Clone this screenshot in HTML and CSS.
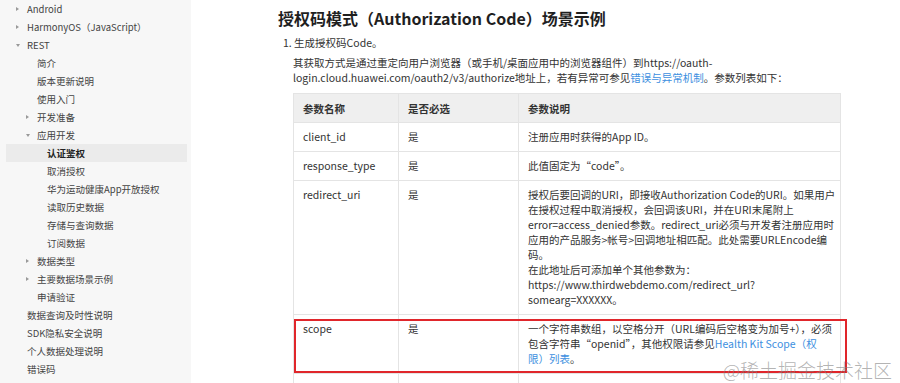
FILE: index.html
```html
<!DOCTYPE html>
<html lang="zh-CN">
<head>
<meta charset="utf-8">
<title>授权码模式（Authorization Code）场景示例</title>
<link rel="stylesheet" href="styles.css">
</head>
<body>
<div class="page">
  <nav class="sidebar">
    <div class="nav-item lv0"><span class="caret"><i class="tri right"></i></span>Android</div>
    <div class="nav-item lv0"><span class="caret"><i class="tri right"></i></span>HarmonyOS（JavaScript）</div>
    <div class="nav-item lv0"><span class="caret"><i class="tri down"></i></span>REST</div>
    <div class="nav-item lv1"><span class="caret"></span>简介</div>
    <div class="nav-item lv1"><span class="caret"></span>版本更新说明</div>
    <div class="nav-item lv1"><span class="caret"></span>使用入门</div>
    <div class="nav-item lv1"><span class="caret"><i class="tri right"></i></span>开发准备</div>
    <div class="nav-item lv1"><span class="caret"><i class="tri down"></i></span>应用开发</div>
    <div class="nav-item lv2 active"><span class="caret"></span>认证鉴权</div>
    <div class="nav-item lv2"><span class="caret"></span>取消授权</div>
    <div class="nav-item lv2"><span class="caret"></span>华为运动健康App开放授权</div>
    <div class="nav-item lv2"><span class="caret"></span>读取历史数据</div>
    <div class="nav-item lv2"><span class="caret"></span>存储与查询数据</div>
    <div class="nav-item lv2"><span class="caret"></span>订阅数据</div>
    <div class="nav-item lv1"><span class="caret"><i class="tri right"></i></span>数据类型</div>
    <div class="nav-item lv1"><span class="caret"><i class="tri right"></i></span>主要数据场景示例</div>
    <div class="nav-item lv1"><span class="caret"></span>申请验证</div>
    <div class="nav-item lv0"><span class="caret"></span>数据查询及时性说明</div>
    <div class="nav-item lv0"><span class="caret"></span>SDK隐私安全说明</div>
    <div class="nav-item lv0"><span class="caret"></span>个人数据处理说明</div>
    <div class="nav-item lv0"><span class="caret"></span>错误码</div>
    <div class="nav-item lv0"><span class="caret"></span>FAQ</div>
  </nav>

  <main class="content">
    <h1 class="title">授权码模式（Authorization Code）场景示例</h1>
    <div class="step">1. 生成授权码Code。</div>
    <p class="desc">其获取方式是通过重定向用户浏览器（或手机/桌面应用中的浏览器组件）到https://oauth-<br>login.cloud.huawei.com/oauth2/v3/authorize地址上，若有异常可参见<a class="link" href="#">错误与异常机制</a>。参数列表如下：</p>

    <div class="table-wrap">
      <table class="params">
        <colgroup>
          <col class="c1"><col class="c2"><col class="c3">
        </colgroup>
        <thead>
          <tr><th>参数名称</th><th>是否必选</th><th>参数说明</th></tr>
        </thead>
        <tbody>
          <tr><td>client_id</td><td>是</td><td>注册应用时获得的App ID。</td></tr>
          <tr><td>response_type</td><td>是</td><td>此值固定为“code”。</td></tr>
          <tr class="tall"><td>redirect_uri</td><td>是</td><td class="text">授权后要回调的URI，即接收Authorization Code的URI。如果用户<br>在授权过程中取消授权，会回调该URI，并在URI末尾附上<br>error=access_denied参数。redirect_uri必须与开发者注册应用时<br>应用的产品服务&gt;帐号&gt;回调地址相匹配。此处需要URLEncode编<br>码。<br>在此地址后可添加单个其他参数为：<br>https://www.thirdwebdemo.com/redirect_url?<br>somearg=XXXXXX。</td></tr>
          <tr><td>scope</td><td>是</td><td class="text">一个字符串数组，以空格分开（URL编码后空格变为加号+），必须<br>包含字符串“openid”，其他权限请参见<a class="link" href="#">Health Kit Scope（权<br>限）列表</a>。</td></tr>
          <tr><td>&nbsp;</td><td>&nbsp;</td><td>&nbsp;</td></tr>
        </tbody>
      </table>
      <div class="mark-box"></div>
    </div>
  </main>
</div>
<div class="watermark">@稀土掘金技术社区</div>
</body>
</html>
```
FILE: styles.css
```css
* { box-sizing: border-box; }
html, body {
  margin: 0;
  padding: 0;
  height: 383px;
  overflow: hidden;
  background: #fff;
  font-family: "Noto Sans CJK SC", "Noto Sans", sans-serif;
  color: #333;
}
.page {
  display: flex;
  align-items: flex-start;
  min-height: 383px;
}
.sidebar {
  width: 191px;
  flex: none;
  background: #f7f7f7;
  min-height: 400px;
  padding-right: 4px;
}
.nav-item {
  height: 18px;
  line-height: 18px;
  font-size: 9.5px;
  color: #444;
  display: flex;
  align-items: center;
  white-space: nowrap;
}
.nav-item.lv0 { padding-left: 14px; }
.nav-item.lv1 { padding-left: 24px; }
.nav-item.lv2 { padding-left: 34px; }
.nav-item.active {
  background: #ebebeb;
  margin-left: 6px;
  padding-left: 28px;
  font-weight: 700;
  color: #222;
}
.caret {
  width: 13px;
  height: 18px;
  flex: none;
  display: flex;
  align-items: center;
  padding-left: 2px;
}
.tri {
  display: block;
  width: 0;
  height: 0;
}
.tri.right {
  border-top: 2px solid transparent;
  border-bottom: 2px solid transparent;
  border-left: 3px solid #999;
}
.tri.down {
  border-left: 2px solid transparent;
  border-right: 2px solid transparent;
  border-top: 3px solid #999;
}
.content {
  flex: 1;
  padding-left: 87px;
  padding-top: 6px;
}
.title {
  margin: 0;
  font-size: 16px;
  line-height: 24px;
  font-weight: 700;
  color: #1f1f1f;
  white-space: nowrap;
}
.step {
  margin-top: 5px;
  padding-left: 5px;
  font-size: 10.5px;
  line-height: 16px;
  color: #333;
}
.desc {
  margin: 4px 0 0 15px;
  font-size: 10.5px;
  line-height: 15px;
  color: #333;
  white-space: nowrap;
}
.link { color: #3d8fe0; text-decoration: none; }
.table-wrap {
  position: relative;
  margin: 8px 0 0 15px;
  width: 556px;
}
.params {
  border-collapse: collapse;
  width: 547px;
  table-layout: fixed;
  font-size: 10.5px;
  color: #333;
}
.params col.c1 { width: 105px; }
.params col.c2 { width: 120px; }
.params col.c3 { width: 322px; }
.params th, .params td {
  border: 1px solid #e4e4e4;
  text-align: left;
  vertical-align: top;
  padding: 6px 9px 7px;
  line-height: 15px;
  white-space: nowrap;
}
.params th {
  background: #efefef;
  font-weight: 700;
  color: #333;
  padding-top: 7px;
  padding-bottom: 6px;
}
.mark-box {
  position: absolute;
  top: 226px;
  left: 1px;
  width: 553px;
  height: 54px;
  border: 2px solid #e0262b;
  pointer-events: none;
}
.watermark {
  position: absolute;
  right: 8px;
  bottom: 2px;
  font-family: "Noto Sans CJK SC", sans-serif;
  font-size: 19px;
  line-height: 22px;
  font-weight: 300;
  color: rgba(130, 130, 130, 0.6);
  white-space: nowrap;
}
```
